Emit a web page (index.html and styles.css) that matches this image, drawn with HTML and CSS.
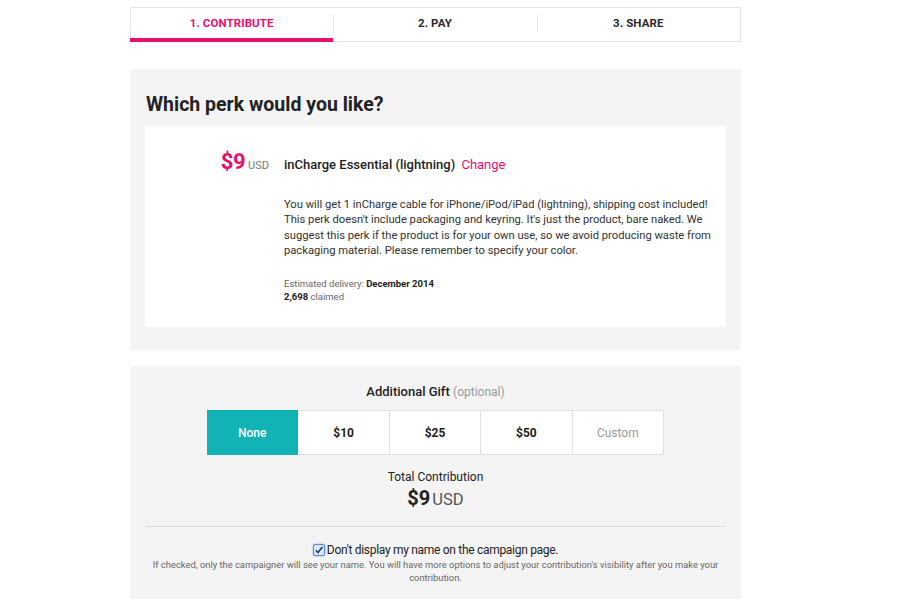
FILE: index.html
```html
<!DOCTYPE html>
<html>
<head>
<meta charset="utf-8">
<link rel="stylesheet" href="styles.css">
</head>
<body>
<div class="page">
  <nav class="steps">
    <div class="step active">1. CONTRIBUTE</div>
    <div class="step">2. PAY</div>
    <div class="step">3. SHARE</div>
  </nav>

  <section class="panel perk-panel">
    <h1 class="title">Which perk would you like?</h1>
    <div class="card">
      <div class="perk-head">
        <div class="price"><span class="amt">$9</span><span class="cur">USD</span></div>
        <div class="perk-name">inCharge Essential (lightning) <a class="change">Change</a></div>
      </div>
      <div class="perk-body">
        <p class="desc">You will get 1 inCharge cable for iPhone/iPod/iPad (lightning), shipping cost included! This perk doesn't include packaging and keyring. It's just the product, bare naked. We suggest this perk if the product is for your own use, so we avoid producing waste from packaging material. Please remember to specify your color.</p>
        <p class="meta">Estimated delivery: <b>December 2014</b><br><b>2,698</b> claimed</p>
      </div>
    </div>
  </section>

  <section class="panel gift-panel">
    <div class="gift-title">Additional Gift <span class="opt">(optional)</span></div>
    <div class="gifts">
      <div class="gift selected">None</div>
      <div class="gift">$10</div>
      <div class="gift">$25</div>
      <div class="gift">$50</div>
      <div class="gift custom">Custom</div>
    </div>
    <div class="total-label">Total Contribution</div>
    <div class="total"><span class="tamt">$9</span><span class="tcur">USD</span></div>
    <hr class="divider">
    <label class="check"><span class="box"><svg width="10" height="10" viewBox="0 0 10 10"><path d="M1.8 5.2 L4 7.5 L8.4 2" fill="none" stroke="#1f3f73" stroke-width="1.6"/></svg></span>Don't display my name on the campaign page.</label>
    <p class="note">If checked, only the campaigner will see your name. You will have more options to adjust your contribution's visibility after you make your contribution.</p>
  </section>
</div>
</body>
</html>
```
FILE: styles.css
```css
html, body { margin: 0; padding: 0; background: #fff; }
body { font-family: Roboto, "Liberation Sans", sans-serif; color: #222; }
.page { width: 611px; margin-left: 130px; padding-top: 7px; }

.steps { display: flex; height: 35px; border: 1px solid #e4e4e4; box-sizing: border-box; background: #fff; }
.step { flex: 1; display: flex; align-items: center; justify-content: center; font-size: 11.5px; font-weight: 700; color: #2a2a2a; position: relative; padding-bottom: 4px; letter-spacing: 0.1px; }
.step + .step::before { content: ""; position: absolute; left: 0; top: 7px; height: 17px; border-left: 1px solid #e4e4e4; }
.step.active { color: #e8106e; border-bottom: 4px solid #e8106e; padding-bottom: 0; margin: 0 0 -1px -1px; }

.panel { background: #f4f4f4; }
.perk-panel { margin-top: 27px; padding: 22px 15px 23px; height: 281px; box-sizing: border-box; }
.title { margin: 0 0 7px 1px; font-size: 19.5px; font-weight: 700; color: #222; line-height: 28px; }
.card { background: #fff; height: 201px; padding: 23px 0 0; box-sizing: border-box; }
.perk-head { display: flex; align-items: baseline; }
.price { width: 124px; text-align: right; box-sizing: border-box; }
.amt { color: #e8106e; font-size: 22px; font-weight: 700; letter-spacing: -0.5px; }
.cur { color: #777; font-size: 11px; margin-left: 3px; }
.perk-name { margin-left: 15px; font-size: 13px; font-weight: 500; color: #222; }
.change { color: #e8106e; font-weight: 400; margin-left: 3px; }
.perk-body { margin-left: 139px; }
.desc { margin: 23px 14px 0 0; font-size: 11.2px; letter-spacing: 0; line-height: 15.4px; color: #333; }
.meta { margin: 18px 0 0; font-size: 9.5px; line-height: 13.5px; color: #666; }
.meta b { color: #222; }

.gift-panel { margin-top: 16px; padding: 18px 15px 20px; }
.gift-title { text-align: center; font-size: 13px; font-weight: 500; color: #222; }
.opt { color: #999; font-weight: 400; font-size: 12px; }
.gifts { display: flex; width: 457px; margin: 11px auto 0; height: 45px; }
.gift { flex: 1; display: flex; align-items: center; justify-content: center; background: #fff; border: 1px solid #e2e2e2; border-left: none; font-size: 12px; font-weight: 700; color: #222; }
.gift.selected { background: #12b3b4; color: #fff; border-color: #12b3b4; font-weight: 500; }
.gift.custom { color: #999; font-weight: 400; }
.total-label { text-align: center; margin-top: 15px; font-size: 12px; color: #222; }
.total { text-align: center; margin-top: 2px; }
.tamt { font-size: 20px; font-weight: 700; color: #222; }
.tcur { font-size: 16.5px; color: #555; margin-left: 2px; }
.divider { border: none; border-top: 1px solid #ddd; margin: 16px 0 16px; }
.check { display: flex; align-items: center; justify-content: center; font-size: 12px; letter-spacing: -0.3px; color: #222; }
.box { width: 10px; height: 10px; border: 1px solid #5a8ad0; border-radius: 2px; background: #dbe6f6; margin-right: 2px; display: inline-flex; align-items: center; justify-content: center; box-shadow: 0 0 2px #7aa7e0; }
.note { margin: 1px 0 0; text-align: center; font-size: 9.4px; line-height: 13px; color: #666; }
```
